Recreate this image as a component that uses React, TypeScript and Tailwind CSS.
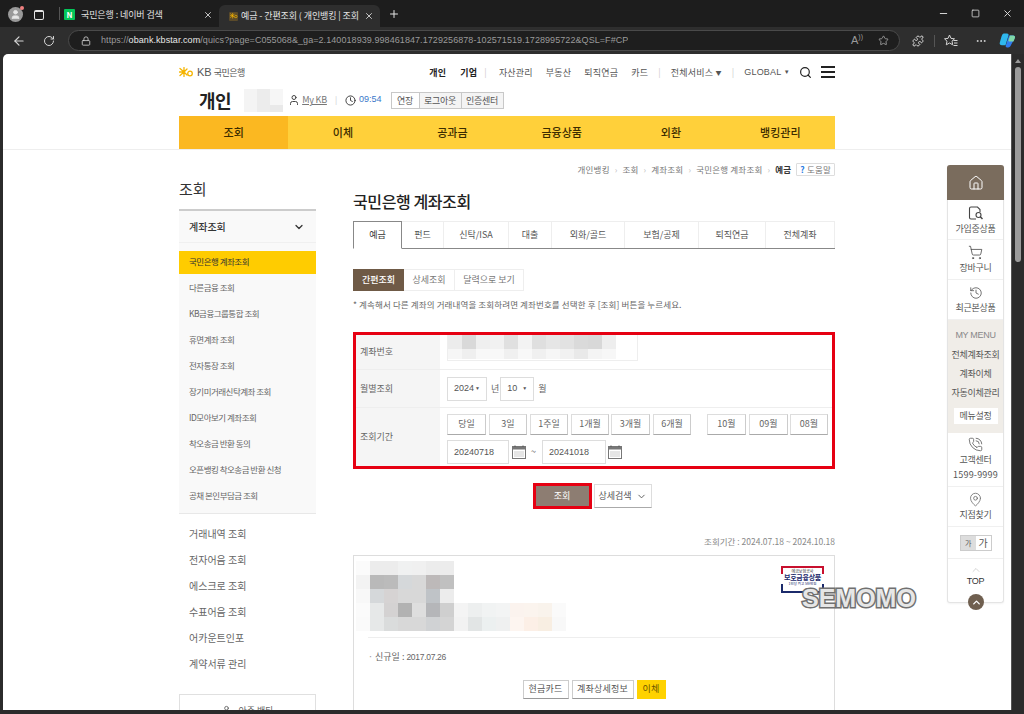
import React from 'react';
import {
  ArrowLeft, RotateCw, X, Plus, Minus, Square, Star, Ellipsis, User, Clock, Search, ChevronDown,
  ChevronUp, House, ShoppingCart, History, PhoneCall, MapPin, Lock, Puzzle,
} from 'lucide-react';

const FONT = "font-['Noto_Sans_CJK_KR','Liberation_Sans',sans-serif]";

const NAV = ['조회', '이체', '공과금', '금융상품', '외환', '뱅킹관리'];
const SIDE_SUB = [
  '국민은행 계좌조회', '다른금융 조회', 'KB금융그룹통합 조회', '휴면계좌 조회', '전자통장 조회',
  '장기미거래신탁계좌 조회', 'ID모아보기 계좌조회', '착오송금 반환 동의', '오픈뱅킹 착오송금 반환 신청', '공채 본인부담금 조회',
];
const SIDE_MAIN = ['거래내역 조회', '전자어음 조회', '에스크로 조회', '수표어음 조회', '어카운트인포', '계약서류 관리'];
const TABS = [
  { label: '예금', w: 'w-[49px]' }, { label: '펀드', w: 'w-[42px]' }, { label: '신탁/ISA', w: 'w-[65px]' },
  { label: '대출', w: 'w-[43px]' }, { label: '외화/골드', w: 'w-[73px]' }, { label: '보험/공제', w: 'w-[74px]' },
  { label: '퇴직연금', w: 'w-[67px]' }, { label: '전체계좌', w: 'w-[69px]' },
];

const HEADER_BLUR = [['#f4f4f4', '#ececec', '#f6f6f6'], ['#f4f4f4', '#ececec', '#e9e9e9']];
const ACCOUNT_BLUR = [
  ['#ececec', '#d9d9d9', '#efefef', '#f1f1f1', '#e0e0e0', '#f3f3f3', '#dfdfdf', '#e6e6e6', '#e2e2e2', '#dadada', '#d8d8d8', '#eeeeee', '#ffffff'],
  ['#f6f6f6', '#efefef', '#f8f8f8', '#f8f8f8', '#f0f0f0', '#f8f8f8', '#f0f0f0', '#f6f6f6', '#f1f1f1', '#e9e9e9', '#f4f4f4', '#f7f7f7', '#ffffff'],
];
const CARD_BLUR = [
  ['#fbfbfb', '#ececec', '#ececec', '#f0f1f1', '#f0f0f0', '#ececec', '#ececec', '#ffffff', '#ffffff', '#ffffff', '#ffffff', '#ffffff', '#ffffff', '#ffffff', '#ffffff'],
  ['#f3f3f3', '#b9b9b9', '#bbbbbb', '#d5d8da', '#d8d8d8', '#bdb9b9', '#c0c0c0', '#ffffff', '#ffffff', '#ffffff', '#ffffff', '#ffffff', '#ffffff', '#ffffff', '#ffffff'],
  ['#f8f8f8', '#d5d8da', '#d6d3d3', '#d8d8d8', '#d8d8d8', '#bfc3c7', '#ececec', '#ffffff', '#ffffff', '#ffffff', '#ffffff', '#ffffff', '#ffffff', '#ffffff', '#ffffff'],
  ['#fbfbfb', '#e6e8e8', '#d4d2d2', '#b2b2b2', '#dedede', '#b5b6b9', '#cfcfcf', '#f4f4f4', '#edefef', '#f1f3f3', '#f3f4f4', '#fbf3ee', '#fbf4ee', '#f9f3ec', '#fafafa'],
  ['#fafafa', '#e6e8e8', '#dadcdc', '#d8d8d8', '#d8d8d8', '#d0d2d4', '#d4d4d4', '#f2f2f2', '#e2e5e5', '#ecf0f0', '#eff0f0', '#fdf5f0', '#fcefe6', '#f8eee2', '#f8f8f8'],
];

// mosaic used for the masked personal data
const Blur = ({ rows, size, h }: { rows: string[][]; size: number; h?: number[] }) => (
  <div className="flex flex-col">
    {rows.map((row, r) => (
      <div key={r} className="flex">
        {row.map((c, i) => (
          <div key={i} style={{ width: size, height: h ? h[r] : size, background: c }} />
        ))}
      </div>
    ))}
  </div>
);

const KbStar = ({ w = 15 }: { w?: number }) => (
  <svg width={w} height={w * 0.67} viewBox="0 0 15 10">
    <path d="M5 5L0.500 5M5 5L1 1.500M5 5L1 8.500M5 5L5 0.500M5 5L5 9.500M5 5L8 2M5 5L8 8" stroke="#f5b400" strokeWidth="1.300" strokeLinecap="round" fill="none" />
    <circle cx="11" cy="6.500" r="2.300" fill="none" stroke="#f5b400" strokeWidth="1.300" />
  </svg>
);

const Copilot = () => (
  <svg width="17" height="17" viewBox="0 0 17 17">
    <path d="M5 1.500C3.500 1.500 3 3 2.500 4.500L0.800 10.500C0.300 12.300 1.200 13.300 3 13.300H6.500L9.500 3.500C9.900 2.300 9.200 1.500 8 1.500Z" fill="#2fb8ee" />
    <path d="M9 15.500C10.500 15.500 11.500 14.500 12 13L15.800 6C16.500 4.500 15.700 3.500 14 3.500H10L6.800 13.500C6.400 14.700 7 15.500 8.200 15.500Z" fill="#2e7bf0" />
    <path d="M11 3.500H14C15.600 3.500 16.400 4.500 15.900 6L14.500 9.500H10.500C9.500 9.500 9.200 8.800 9.500 8Z" fill="#7fd8a8" />
  </svg>
);

const Favorites = () => (
  <svg width="14" height="13" viewBox="0 0 14 13" fill="none" stroke="#d6d6d6" strokeWidth="1">
    <path d="M5.500 1L7 4.400L10.500 4.800L8 7.200L8.700 10.800L5.500 9L2.300 10.800L3 7.200L0.500 4.800L4 4.400Z" />
    <path d="M9.500 6.500H13.500M10 9H13.500M9.500 11.500H13.500" />
  </svg>
);

const Calendar = () => (
  <svg width="14" height="14" viewBox="0 0 14 14" className="shrink-0">
    <rect x="0.500" y="1.500" width="13" height="12" fill="#fff" stroke="#777" />
    <rect x="0.500" y="1.500" width="13" height="3" fill="#777" />
    <path d="M3 0.500V2M11 0.500V2" stroke="#555" />
    <path d="M2.500 7H11.500M2.500 9H11.500M2.500 11H11.500" stroke="#999" strokeDasharray="1 1" />
  </svg>
);

const AccountIcon = () => (
  <svg width="16" height="15" viewBox="0 0 16 15" fill="none" stroke="#444" strokeWidth="1.100">
    <path d="M8 13H3C1.900 13 1.500 12.500 1.500 11.500V2.500C1.500 1.500 1.900 1 3 1H9.500L12 3.500V6" />
    <circle cx="10.500" cy="9" r="2.500" />
    <path d="M12.300 10.800L14.500 13" strokeWidth="1.500" />
  </svg>
);

const TabBar = () => (
  <div className="h-[27px] shrink-0 bg-[#1d1d1d] flex items-center text-[#e4e4e4] text-[9px] tracking-[-0.1px]">
    <div className="w-[59px] shrink-0 flex items-center pl-[8px] gap-[11px] pt-[2px]">
      <div className="relative w-[15px] h-[15px] rounded-full bg-[#9a9a9a] flex items-center justify-center">
        <User size={11} className="text-[#e8e8e8]" fill="#e8e8e8" />
        <div className="absolute -top-[1px] -right-[1px] w-[4px] h-[4px] rounded-full bg-[#f08080]" />
      </div>
      <div className="w-[10px] h-[10px] rounded-[2px] border border-[#e4e4e4] border-t-2" />
    </div>
    <div className="w-px h-[13px] bg-[#555]" />
    <div className="w-[159px] shrink-0 flex items-center pl-[4px] pr-[4px] pt-[2px]">
      <div className="w-[11px] h-[11px] rounded-[1px] bg-[#03c75a] text-white text-[8px] font-bold leading-[11px] text-center">N</div>
      <span className="ml-[6px] flex-1 whitespace-nowrap">국민은행 : 네이버 검색</span>
      <X size={10} className="mr-[2px]" />
    </div>
    <div className="w-[161px] shrink-0 h-[22px] mt-[5px] bg-[#2e2e2e] rounded-t-[6px] flex items-center pl-[10px] pr-[6px]">
      <div className="w-[9px] h-[9px] rounded-[1px] bg-[#5a4a2a] flex items-center justify-center"><KbStar w={8} /></div>
      <span className="ml-[3px] flex-1 whitespace-nowrap overflow-hidden">예금 - 간편조회 ( 개인뱅킹 | 조회</span>
      <X size={10} className="ml-[4px]" />
    </div>
    <Plus size={12} className="ml-[8px]" />
    <div className="ml-auto flex items-center pr-[11px] gap-[22px]">
      <Minus size={11} />
      <Square size={9} />
      <X size={11} />
    </div>
  </div>
);

const Toolbar = () => (
  <div className="h-[27px] shrink-0 bg-[#2e2e2e] flex items-center text-[#d6d6d6]">
    <ArrowLeft size={14} className="ml-[12px]" />
    <RotateCw size={12} className="ml-[17px]" />
    <div className="ml-[13px] w-[832px] h-[21px] rounded-full bg-[#1e1e1e] border border-[#4a4a4a] flex items-center pl-[12px] pr-[10px] text-[9px] text-[#9a9a9a] font-['Liberation_Sans',sans-serif]">
      <Lock size={10} className="text-[#d0d0d0]" />
      <span className="ml-[10px] truncate tracking-[0.07px]">https://<b className="text-[#e8e8e8] font-normal">obank.kbstar.com</b>/quics?page=C055068&amp;_ga=2.140018939.998461847.1729256878-102571519.1728995722&amp;QSL=F#CP</span>
      <span className="ml-auto text-[11px]">A<span className="text-[7px] align-super">))</span></span>
      <Star size={11} className="ml-[15px]" />
    </div>
    <Puzzle size={12} className="ml-[12px]" />
    <div className="ml-[10px] w-px h-[12px] bg-[#555]" />
    <div className="ml-[9px]"><Favorites /></div>
    <Ellipsis size={12} className="ml-[17px]" />
    <div className="ml-[12px]"><Copilot /></div>
  </div>
);

const Header = () => (
  <header className="h-[96px] border-b border-[#eeeeee]">
    <div className="w-[656px] mx-auto h-full flex flex-col">
      <div className="h-[31px] flex items-center justify-between pt-[6px]">
        <div className="flex items-center gap-[3px] text-[9px] text-[#555]">
          <KbStar />
          <span className="font-['Liberation_Sans',sans-serif] text-[11px] leading-none">KB</span>
          <span className="-ml-[1px] tracking-[-0.5px]">국민은행</span>
        </div>
        <div className="flex items-center text-[9px] text-[#555] tracking-[0.2px]">
          <b className="text-[#222] font-bold">개인</b>
          <b className="text-[#222] font-bold ml-[14px]">기업</b>
          <span className="ml-[7px] mr-[12px] text-[#ccc]">|</span>
          <span>자산관리</span>
          <span className="ml-[13px]">부동산</span>
          <span className="ml-[13px]">퇴직연금</span>
          <span className="ml-[13px]">카드</span>
          <span className="mx-[10px] text-[#ccc]">|</span>
          <span>전체서비스 <span className="text-[6px] align-[1px]">▼</span></span>
          <span className="mx-[10px] text-[#ccc]">|</span>
          <span className="font-['Liberation_Sans',sans-serif]">GLOBAL <span className="text-[6px] align-[1px]">▼</span></span>
          <Search size={13} className="ml-[9px] text-[#222]" strokeWidth={2.2} />
          <div className="ml-[9px] w-[14px] flex flex-col gap-[3px]">
            <div className="h-[2px] bg-[#222]" /><div className="h-[2px] bg-[#222]" /><div className="h-[2px] bg-[#222]" />
          </div>
        </div>
      </div>
      <div className="h-[32px] flex items-center pb-[1px]">
        <span className="ml-[20px] text-[18px] leading-none font-bold text-[#222] tracking-[-0.5px]">개인</span>
        <div className="ml-[13px]"><Blur rows={HEADER_BLUR} size={13} h={[16, 7]} /></div>
        <User size={12} className="ml-[5px] text-[#444]" />
        <span className="ml-[2px] text-[9px] underline text-[#777] tracking-[-0.2px]">My KB</span>
        <span className="mx-[8px] text-[8px] text-[#ccc]">|</span>
        <Clock size={11} className="text-[#333]" />
        <span className="ml-[3px] text-[9px] text-[#3a78c9] font-['Liberation_Sans',sans-serif]">09:54</span>
        <div className="ml-[9px] flex h-[17px] border border-[#c8c8c8] text-[9px] text-[#555] leading-[15px] text-center tracking-[-0.3px]">
          <span className="w-[27px]">연장</span>
          <span className="w-[42px] border-l border-[#c8c8c8] bg-[#f4f4f4]">로그아웃</span>
          <span className="w-[42px] border-l border-[#c8c8c8] bg-[#f4f4f4]">인증센터</span>
        </div>
      </div>
      <nav className="h-[33px] grid grid-cols-6 bg-[#ffd03a] text-[11px] font-medium text-[#3b2c00]">
        {NAV.map((n, i) => (
          <div key={n} className={`flex items-center justify-center ${i === 0 ? 'bg-[#fbb821]' : ''}`}>{n}</div>
        ))}
      </nav>
    </div>
  </header>
);

const Sidebar = () => (
  <aside className="w-[137px] shrink-0">
    <h2 className="h-[33px] mt-[13px] text-[15px] leading-[26px] text-[#333]">조회</h2>
    <div className="border-t-2 border-[#cccccc] bg-[#f9f9f9] border-b border-b-[#e8e8e8]">
      <div className="h-[32px] flex items-center justify-between pl-[10px] pr-[11px] text-[10px] font-medium text-[#333] border-b border-[#f0f0f0]">
        계좌조회
        <ChevronDown size={12} className="text-[#333]" strokeWidth={2.5} />
      </div>
      <ul className="pt-[8px] pb-[5px]">
        {SIDE_SUB.map((s, i) => (
          <li key={s} className={`h-[23px] mb-[3px] last:mb-0 flex items-center pl-[10px] pb-[2px] text-[8.500px] tracking-[-0.5px] ${i === 0 ? 'bg-[#ffcc00] text-[#333]' : 'text-[#666]'}`}>{s}</li>
        ))}
      </ul>
    </div>
    <ul className="pt-[6px]">
      {SIDE_MAIN.map((s) => (
        <li key={s} className="h-[26px] flex items-center pl-[10px] text-[10px] text-[#666]">{s}</li>
      ))}
    </ul>
    <div className="mt-[18px] h-[30px] border border-[#e0e0e0] flex justify-center items-start gap-[6px] text-[9px] leading-[12px] text-[#666] pt-[10px]">
      <User size={11} />아주 밴타
    </div>
  </aside>
);

const RangeBtn = ({ label, w }: { label: string; w: string }) => (
  <div className={`${w} h-[21px] shrink-0 bg-white border border-[#dddddd] border-b-[#aaaaaa] border-r-[#cccccc] text-[9px] text-[#666] leading-[17px] text-center`}>{label}</div>
);

const Select = ({ label, w }: { label: string; w: string }) => (
  <div className={`${w} h-[24px] border border-[#dddddd] flex items-center justify-between px-[6px] text-[9px] text-[#555] font-['Liberation_Sans',sans-serif]`}>
    {label}<span className="text-[5px]">▼</span>
  </div>
);

const SearchTable = () => (
  <div className="border-[3px] border-[#e60012] text-[9px] text-[#666]">
    <div className="flex h-[35px] border-b border-[#eeeeee]">
      <div className="w-[84px] bg-[#f5f5f5] flex items-center pl-[4px]">계좌번호</div>
      <div className="pl-[7px] pt-[0px]">
        <div className="w-[191px] border border-[#eeeeee] border-t-0 h-[26px]">
          <Blur rows={ACCOUNT_BLUR} size={14} h={[14, 10]} />
        </div>
      </div>
    </div>
    <div className="flex h-[38px] border-b border-[#eeeeee]">
      <div className="w-[84px] bg-[#f5f5f5] flex items-center pl-[4px]">월별조회</div>
      <div className="pl-[7px] flex items-center">
        <Select label="2024" w="w-[40px]" />
        <span className="ml-[4px] mr-[1px]">년</span>
        <Select label="10" w="w-[34px]" />
        <span className="ml-[4px]">월</span>
      </div>
    </div>
    <div className="flex h-[58px]">
      <div className="w-[84px] bg-[#f5f5f5] flex items-center pl-[4px]">조회기간</div>
      <div className="pl-[7px] pt-[6px]">
        <div className="flex">
          <RangeBtn label="당일" w="w-[39px]" />
          <RangeBtn label="3일" w="w-[38px] ml-[3px]" />
          <RangeBtn label="1주일" w="w-[38px] ml-[3px]" />
          <RangeBtn label="1개월" w="w-[38px] ml-[3px]" />
          <RangeBtn label="3개월" w="w-[39px] ml-[2px]" />
          <RangeBtn label="6개월" w="w-[38px] ml-[3px]" />
          <RangeBtn label="10월" w="w-[39px] ml-[16px]" />
          <RangeBtn label="09월" w="w-[39px] ml-[3px]" />
          <RangeBtn label="08월" w="w-[38px] ml-[2px]" />
        </div>
        <div className="flex items-center mt-[5px] text-[#555]">
          <div className="w-[62px] h-[24px] border border-[#dddddd] leading-[22px] pl-[6px] font-['Liberation_Sans',sans-serif]">20240718</div>
          <div className="ml-[3px]"><Calendar /></div>
          <span className="ml-[5px] mr-[6px]">~</span>
          <div className="w-[64px] h-[24px] border border-[#dddddd] leading-[22px] pl-[6px] font-['Liberation_Sans',sans-serif]">20241018</div>
          <div className="ml-[2px]"><Calendar /></div>
        </div>
      </div>
    </div>
  </div>
);

const ResultCard = () => (
  <div className="relative mt-[7px] border border-[#dddddd] h-[200px] px-[14px]">
    <div className="-ml-[12px] mt-[5px]"><Blur rows={CARD_BLUR} size={14} /></div>
    <div className="absolute right-[10px] top-[10px] w-[43px] h-[27px] text-center leading-none">
      <div className="absolute inset-x-0 top-0 h-[9px] border-x-2 border-t-2 border-[#c8102e]" />
      <div className="absolute inset-x-0 bottom-0 h-[9px] border-x-2 border-b-2 border-[#1b2a6b]" />
      <div className="relative text-[4px] text-[#333] pt-[3px]">예금보험공사</div>
      <div className="relative text-[7px] font-bold text-[#1b2a6b] mt-[1px] tracking-[-0.3px] bg-white">보호금융상품</div>
      <div className="relative text-[3.500px] text-[#1b2a6b] mt-[1px]">1인당 최고 5천만원</div>
    </div>
    <div className="mt-[6px] border-t border-[#eeeeee] pt-[12px] text-[9px] text-[#666]">
      <span className="text-[#999] mr-[2px]">·</span>신규일 : <span className="font-['Liberation_Sans',sans-serif] text-[8.500px] tracking-[-0.3px]">2017.07.26</span>
    </div>
    <div className="mt-[16px] flex justify-center gap-[3px] text-[9px] h-[19px] leading-[16px] text-center text-[#555] tracking-[0.2px]">
      <div className="w-[46px] border border-[#cccccc] border-b-[#999999]">현금카드</div>
      <div className="w-[62px] border border-[#cccccc] border-b-[#999999]">계좌상세정보</div>
      <div className="w-[29px] bg-[#ffd200] leading-[18px] text-[#6b5300]">이체</div>
    </div>
  </div>
);

const Crumb = () => <span className="mx-[5px] text-[#bbb]">›</span>;

const MainColumn = () => (
  <section className="w-[482px] shrink-0 ml-[37px]">
    <div className="h-[13px] flex items-center justify-end text-[8.500px] text-[#777] tracking-[0.2px]">
      개인뱅킹<Crumb />조회<Crumb />계좌조회<Crumb />국민은행 계좌조회<Crumb />
      <b className="text-[#333] font-bold">예금</b>
      <span className="ml-[5px] border border-[#dddddd] px-[3px] h-[13px] leading-[11px] rounded-[1px] whitespace-nowrap"><b className="text-[#2a7ae2]">?</b> 도움말</span>
    </div>
    <h1 className="mt-[13px] h-[24px] text-[16px] leading-[24px] font-medium text-[#222] tracking-[-0.4px]">국민은행 계좌조회</h1>
    <div className="mt-[8px] flex h-[28px] border-b border-[#888888] text-[9px] text-[#555]">
      {TABS.map((t, i) => (
        <div
          key={t.label}
          className={`${t.w} flex items-center justify-center ${i === 0
            ? 'h-[28px] border border-[#888888] border-b-white bg-white text-[#333]'
            : 'border-t border-r border-[#eeeeee]'}`}
        >
          {t.label}
        </div>
      ))}
    </div>
    <div className="mt-[20px] flex h-[22px] text-[9px] text-[#777] leading-[20px] text-center">
      <div className="w-[51px] bg-[#6f5a46] text-white font-medium leading-[22px]">간편조회</div>
      <div className="w-[50px] border-y border-[#eeeeee]">상세조회</div>
      <div className="w-[70px] border border-[#eeeeee]">달력으로 보기</div>
    </div>
    <p className="mt-[7px] h-[13px] text-[8.500px] text-[#666] leading-[13px] tracking-[0.12px]">* 계속해서 다른 계좌의 거래내역을 조회하려면 계좌번호를 선택한 후 [조회] 버튼을 누르세요.</p>
    <div className="mt-[21px]"><SearchTable /></div>
    <div className="mt-[14px] pr-[4px] flex justify-center items-center gap-[2px] text-[9px]">
      <div className="w-[59px] h-[26px] border-[3px] border-[#e60012] bg-[#8d7d72] text-white text-center leading-[20px]">조회</div>
      <div className="w-[58px] h-[24px] border border-[#dddddd] border-b-[#aaaaaa] text-[#555] flex items-center justify-center gap-[4px]">
        상세검색<ChevronDown size={11} />
      </div>
    </div>
    <div className="mt-[25px] h-[14px] text-right text-[8.500px] text-[#888] leading-[14px]">조회기간 : 2024.07.18 ~ 2024.10.18</div>
    <ResultCard />
  </section>
);

const SideItem = ({ icon, label, h }: { icon: React.ReactNode; label: React.ReactNode; h: string }) => (
  <div className={`${h} flex flex-col items-center justify-center border-b border-[#f0f0f0] text-[9px] text-[#555] leading-[15px] text-center`}>
    {icon}
    {label}
  </div>
);

const QuickPanel = () => (
  <div className="absolute left-[947px] top-[111px] w-[57px] bg-white border-x border-b border-[#e4e4e4] rounded-[3px] shadow-[0_1px_2px_rgba(0,0,0,0.05)] tracking-[-0.3px]">
    <div className="h-[35px] -mx-px bg-[#7a6c5d] rounded-t-[3px] flex items-center justify-center">
      <House size={16} className="text-white" strokeWidth={1.5} />
    </div>
    <SideItem h="h-[40px] pt-[2px]" icon={<AccountIcon />} label="가입중상품" />
    <SideItem h="h-[40px] pt-[1px]" icon={<ShoppingCart size={15} strokeWidth={1.25} className="text-[#444]" />} label="장바구니" />
    <SideItem h="h-[40px] pt-[1px]" icon={<History size={14} strokeWidth={1.25} className="text-[#444]" />} label="최근본상품" />
    <div className="h-[113px] bg-[#f0ede8] flex flex-col items-center pt-[6px] text-[9px] text-[#555] leading-[19px]">
      <span className="text-[#888] font-['Liberation_Sans',sans-serif]">MY MENU</span>
      <span>전체계좌조회</span>
      <span>계좌이체</span>
      <span>자동이체관리</span>
      <div className="mt-[6px] w-[44px] h-[16px] bg-white text-center leading-[16px]">메뉴설정</div>
    </div>
    <SideItem h="h-[54px]" icon={<PhoneCall size={15} strokeWidth={1.25} className="text-[#555]" />} label={<span>고객센터<br /><span className="tracking-[0.2px]">1599-9999</span></span>} />
    <SideItem h="h-[40px]" icon={<MapPin size={15} strokeWidth={1.25} className="text-[#666]" />} label="지점찾기" />
    <div className="h-[32px] flex items-center justify-center border-b border-[#f0f0f0]">
      <div className="flex w-[32px] h-[16px] border border-[#ccc] text-center text-[#555]">
        <span className="w-1/2 bg-[#dddddd] text-[7px] leading-[14px]">가</span>
        <span className="w-1/2 text-[10px] leading-[13px]">가</span>
      </div>
    </div>
    <div className="h-[43px] flex flex-col items-center pt-[5px] text-[9px] text-[#333] font-['Liberation_Sans',sans-serif]">
      <ChevronUp size={12} className="text-[#aaa]" strokeWidth={1} />
      <span className="leading-[11px]">TOP</span>
    </div>
    <div className="absolute left-[20px] -bottom-[8px] w-[16px] h-[16px] rounded-full bg-[#6f5f4f] flex items-center justify-center">
      <ChevronUp size={11} className="text-white" strokeWidth={3} />
    </div>
  </div>
);

const Scrollbar = () => (
  <div className="w-[13px] shrink-0 bg-[#2b2b2b] flex flex-col items-center border-l border-[#555]">
    <div className="mt-[5px] w-0 h-0 border-x-[3px] border-x-transparent border-b-[4px] border-b-[#9a9a9a]" />
    <div className="mt-[4px] w-[6px] h-[195px] rounded-full bg-[#9b9b9b]" />
  </div>
);

export default function App() {
  return (
    <div className={`${FONT} relative w-[1024px] h-[714px] overflow-hidden bg-[#2b2b2b] flex flex-col`}>
      <TabBar />
      <Toolbar />
      <div className="relative flex-1 min-h-0 flex pl-[3px] pb-[4px]">
        <div className="relative flex-1 min-w-0 bg-white rounded-tl-[5px] overflow-hidden">
          <Header />
          <div className="w-[656px] mx-auto flex pt-[13px]">
            <Sidebar />
            <MainColumn />
          </div>
        </div>
        <Scrollbar />
        <QuickPanel />
      </div>
      {/* watermark */}
      <div className="absolute left-[802px] top-[584px] text-[25px] leading-[28px] font-bold font-['Liberation_Sans',sans-serif] text-[#e6e6e6] [-webkit-text-stroke:3px_#707070] [paint-order:stroke]">SEMOMO</div>
    </div>
  );
}
